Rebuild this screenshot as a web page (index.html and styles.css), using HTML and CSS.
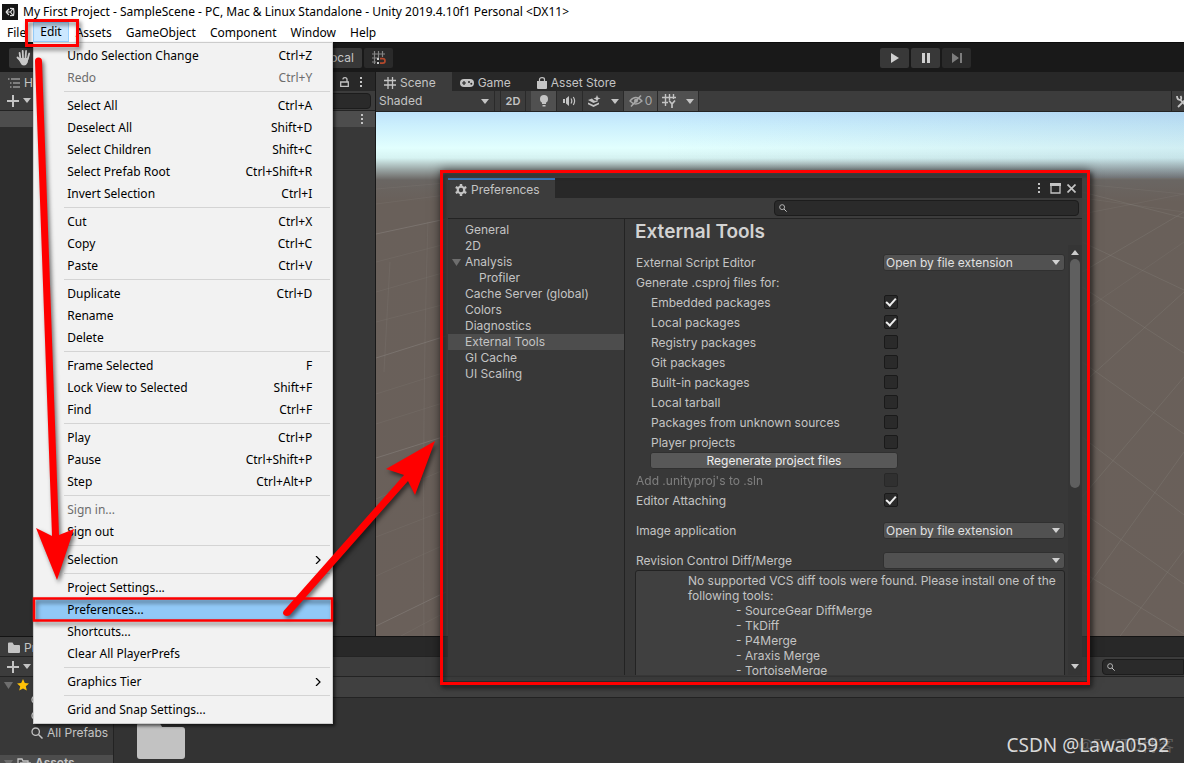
FILE: index.html
```html
<!DOCTYPE html>
<html lang="en">
<head>
<meta charset="utf-8">
<title>My First Project - SampleScene - Unity</title>
<link rel="stylesheet" href="styles.css">
</head>
<body>
<svg class="defs" aria-hidden="true">
  <symbol id="i-dots" viewBox="0 0 4 12"><path d="M1 1h2v2H1zM1 5h2v2H1zM1 9h2v2H1z" fill="currentColor"/></symbol>
  <symbol id="i-caret" viewBox="0 0 8 5"><path d="M0 0h8L4 5z" fill="currentColor"/></symbol>
  <symbol id="i-up" viewBox="0 0 8 5"><path d="M0 5h8L4 0z" fill="currentColor"/></symbol>
  <symbol id="i-plus" viewBox="0 0 12 12"><path d="M6 0v12M0 6h12" stroke="currentColor" stroke-width="2" fill="none"/></symbol>
  <symbol id="i-search" viewBox="0 0 12 12"><circle cx="4.700" cy="4.700" r="3.700" fill="none" stroke="currentColor" stroke-width="1.300"/><path d="M7.500 7.500l4 4" stroke="currentColor" stroke-width="1.500"/></symbol>
  <symbol id="i-list" viewBox="0 0 12 10"><path d="M0 1h1.500M3 1h9M2 5h1.500M5 5h7M2 9h1.500M5 9h7" stroke="currentColor" stroke-width="1.200" fill="none"/></symbol>
  <symbol id="i-grid" viewBox="0 0 12 12"><path d="M4 0v12M8.500 0v12M0 3.500h12M0 8h12" stroke="currentColor" stroke-width="1.300" fill="none"/></symbol>
  <symbol id="i-folder" viewBox="0 0 12 11"><path d="M0 1.500Q0 .5 1 .5h3.500L6 3h5q1 0 1 1v6q0 1-1 1H1q-1 0-1-1z" fill="currentColor"/></symbol>
  <symbol id="i-chevron" viewBox="0 0 6 8"><path d="M1 0l4 4-4 4" stroke="currentColor" stroke-width="1.200" fill="none"/></symbol>
</svg>

<header class="titlebar">
  <svg class="logo" viewBox="0 0 16 16"><rect width="16" height="16" fill="#151515"/><g stroke="#ddd" stroke-width="1.200" fill="none"><path d="M4 8l3-3M4 8l3 3M4 8h4.500M8.500 8l2.500-3.500M8.500 8l2.500 3.500M8 4.300l3.500.2.500 3.500M8 11.700l3.500-.2L12 8"/></g></svg>
  <h1 class="apptitle">My First Project - SampleScene - PC, Mac &amp; Linux Standalone - Unity 2019.4.10f1 Personal &lt;DX11&gt;</h1>
</header>

<nav class="menubar">
  <button class="mb">File</button>
  <div class="mbwrap">
    <button class="mb open">Edit</button>
    <div class="menu">
      <button class="mi"><span>Undo Selection Change</span><span>Ctrl+Z</span></button>
      <button class="mi" disabled><span>Redo</span><span>Ctrl+Y</span></button>
      <hr>
      <button class="mi"><span>Select All</span><span>Ctrl+A</span></button>
      <button class="mi"><span>Deselect All</span><span>Shift+D</span></button>
      <button class="mi"><span>Select Children</span><span>Shift+C</span></button>
      <button class="mi"><span>Select Prefab Root</span><span>Ctrl+Shift+R</span></button>
      <button class="mi"><span>Invert Selection</span><span>Ctrl+I</span></button>
      <hr>
      <button class="mi"><span>Cut</span><span>Ctrl+X</span></button>
      <button class="mi"><span>Copy</span><span>Ctrl+C</span></button>
      <button class="mi"><span>Paste</span><span>Ctrl+V</span></button>
      <hr>
      <button class="mi"><span>Duplicate</span><span>Ctrl+D</span></button>
      <button class="mi"><span>Rename</span></button>
      <button class="mi"><span>Delete</span></button>
      <hr>
      <button class="mi"><span>Frame Selected</span><span>F</span></button>
      <button class="mi"><span>Lock View to Selected</span><span>Shift+F</span></button>
      <button class="mi"><span>Find</span><span>Ctrl+F</span></button>
      <hr>
      <button class="mi"><span>Play</span><span>Ctrl+P</span></button>
      <button class="mi"><span>Pause</span><span>Ctrl+Shift+P</span></button>
      <button class="mi"><span>Step</span><span>Ctrl+Alt+P</span></button>
      <hr>
      <button class="mi" disabled><span>Sign in...</span></button>
      <button class="mi"><span>Sign out</span></button>
      <hr>
      <button class="mi sub"><span>Selection</span><svg class="chev"><use href="#i-chevron"/></svg></button>
      <hr>
      <button class="mi"><span>Project Settings...</span></button>
      <button class="mi hot"><span>Preferences...</span></button>
      <button class="mi"><span>Shortcuts...</span></button>
      <button class="mi"><span>Clear All PlayerPrefs</span></button>
      <hr>
      <button class="mi sub"><span>Graphics Tier</span><svg class="chev"><use href="#i-chevron"/></svg></button>
      <hr>
      <button class="mi"><span>Grid and Snap Settings...</span></button>
    </div>
  </div>
  <button class="mb">Assets</button>
  <button class="mb">GameObject</button>
  <button class="mb">Component</button>
  <button class="mb">Window</button>
  <button class="mb">Help</button>
</nav>

<div class="toolbar">
  <div class="tools">
    <button class="tb hand" aria-label="Hand tool"><svg width="16" height="16" viewBox="0 0 16 16"><path d="M4.500 9L3.600 3M7 8L6.700 1M9.500 8l.6-7M11.700 9l1.500-5.500M5 11L1.500 7.500" stroke="#c8c8c8" stroke-width="1.800" stroke-linecap="round"/><path d="M4 8h8.500l-.8 4.500Q10.500 15.500 8 15.500T4.500 13L2.500 9z" fill="#c8c8c8"/></svg></button>
    <button class="tb local">Local</button>
    <button class="tb snap" aria-label="Grid snapping"><svg width="14" height="14" viewBox="0 0 14 14"><path d="M2.500 0v13M6.500 0v7M10.500 0v6M0 3h13M0 7h6M0 11h4" stroke="#858585" stroke-width="1.200"/><path d="M8 7.700h2.700q2.300 0 2.300 2.200t-2.300 2.200H8" stroke="#b4492c" stroke-width="1.700" fill="none"/><path d="M5 7h2v2H5zM5 11h2v2H5z" fill="#ccc"/></svg></button>
  </div>
  <div class="play">
    <button class="tb" aria-label="Play"><svg width="10" height="12" viewBox="0 0 10 12"><path d="M1 1l8 5-8 5z" fill="#d0d0d0"/></svg></button>
    <button class="tb" aria-label="Pause"><svg width="10" height="12" viewBox="0 0 10 12"><path d="M1 1h3v10H1zM6 1h3v10H6z" fill="#d0d0d0"/></svg></button>
    <button class="tb dim" aria-label="Step"><svg width="12" height="12" viewBox="0 0 12 12"><path d="M1 1l7 5-7 5zM9 1h2v10H9z" fill="#7d7d7d"/></svg></button>
  </div>
</div>

<main class="work">
  <section class="hier">
    <div class="tabs">
      <span class="tab on"><svg width="12" height="10"><use href="#i-list"/></svg>Hierarchy</span>
      <span class="tabend"><svg width="9" height="10" viewBox="0 0 9 10"><path d="M.7 5h7.600v4.300H.7zM7 5V2.500Q7 .7 5 .7T2.800 2.300" fill="none" stroke="currentColor" stroke-width="1.300"/></svg><svg width="4" height="12"><use href="#i-dots"/></svg></span>
    </div>
    <div class="bar"><svg width="12" height="12"><use href="#i-plus"/></svg><svg width="8" height="5"><use href="#i-caret"/></svg><input class="search hsearch" aria-label="Search hierarchy"></div>
    <div class="scenerow"><svg width="4" height="12"><use href="#i-dots"/></svg></div>
    <div class="hbody"></div>
  </section>
  <section class="scene">
    <div class="tabs">
      <span class="tab on first"><svg width="12" height="12"><use href="#i-grid"/></svg>Scene</span>
      <span class="tab game"><svg width="14" height="8" viewBox="0 0 14 8"><rect width="14" height="8" rx="4" fill="currentColor"/><path d="M2 4h4M4 2v4" stroke="#282828" stroke-width="1.200"/><circle cx="9" cy="3" r="1" fill="#282828"/><circle cx="11.300" cy="4.700" r="1" fill="#282828"/></svg>Game</span>
      <span class="tab"><svg width="10" height="12" viewBox="0 0 10 12"><path d="M0 4h10v7q0 1-1 1H1q-1 0-1-1z" fill="currentColor"/><path d="M2.500 6V2.500Q2.500.7 5 .7t2.500 1.800V6" fill="none" stroke="currentColor" stroke-width="1.200"/></svg>Asset Store</span>
    </div>
    <div class="bar stools">
      <button class="st shaded">Shaded<svg width="8" height="5"><use href="#i-caret"/></svg></button>
      <button class="st two">2D</button>
      <button class="st lit" aria-label="Lighting"><svg width="10" height="12" viewBox="0 0 10 12"><circle cx="5" cy="4" r="4" fill="currentColor"/><path d="M3 7h4v2H3zM3.500 10h3v1.500h-3z" fill="currentColor"/></svg></button>
      <button class="st" aria-label="Audio"><svg width="13" height="10" viewBox="0 0 13 10"><path d="M0 3h2v4H0zM3 2.500L6 0v10L3 7.500z" fill="currentColor"/><path d="M8 2.500q1.600 2.500 0 5M10.300 1q2.600 4 0 8" stroke="currentColor" stroke-width="1.200" fill="none"/></svg></button>
      <button class="st fx" aria-label="Effects"><svg width="13" height="12" viewBox="0 0 13 12"><path d="M0 5l4-1.500 2 2 4 .7L5.500 8zM0 7.500L5.500 10 11 7.500v1.700L5.500 12 0 9.200z" fill="currentColor"/><path d="M9 0l1 2.400 2.500 1L10 4.400 9 7 8 4.400l-2.500-1L8 2.400z" fill="currentColor"/></svg><svg width="8" height="5"><use href="#i-caret"/></svg></button>
      <button class="st lit eye"><svg width="14" height="12" viewBox="0 0 14 12"><path d="M1 6q5.500-7 12 0-6.500 6-12 0z" fill="none" stroke="currentColor" stroke-width="1.300"/><circle cx="7" cy="5.700" r="2" fill="currentColor"/><path d="M2 11.500L12 .5" stroke="currentColor" stroke-width="1.500"/></svg>0</button>
      <button class="st lit gridy" aria-label="Grid"><svg width="14" height="14" viewBox="0 0 14 14"><path d="M3.500 0v12M7.500 0v6M11.500 0v5M0 3.500h14M0 8.500h6" stroke="currentColor" stroke-width="1.400"/><path d="M7 6.500l3 3.500v4M13 6.500L10 10" stroke="currentColor" stroke-width="1.700" fill="none"/></svg><svg width="8" height="5"><use href="#i-caret"/></svg></button>
      <button class="st wrench" aria-label="Tools"><svg width="12" height="13" viewBox="0 0 12 13"><path d="M1 1q0 4 3.500 4L11 12M4.500 1Q6 3 4.500 5M2 12L11 3" stroke="currentColor" stroke-width="1.800" fill="none"/></svg></button>
    </div>
    <div class="view">
      <svg class="ground" viewBox="0 0 809 524" preserveAspectRatio="none">
        <g stroke="#8b8580" stroke-opacity=".5" fill="none">
          <path d="M0 122L70 107M0 246L70 224M0 346L70 324M0 514L70 480"/>
          <path stroke-opacity=".2" d="M0 77L70 71M0 92L70 83M0 150L70 132M0 180L70 160M0 210L70 192M0 282L70 260M0 312L70 290M0 387L70 357M0 425L70 398M0 464L70 432M25 524L70 500M14 150L8 260M52 110Q46 300 48 524"/>
          <path stroke-opacity=".3" d="M707 482L809 340M707 80l102 26M707 130l102 48M707 175l102 66M707 250l102 72M707 325l102 78M707 400l102 72M707 460l102 62M745 524l64-86M809 100l-102 60M809 180l-102 92M809 265l-102 120"/>
          <path stroke-opacity=".2" d="M707 72l102 10M707 86l102 14M809 82l-102 20M809 130l-102 70"/>
        </g>
      </svg>
    </div>
  </section>
</main>

<section class="project">
  <div class="tabs">
    <span class="tab on"><svg width="12" height="11"><use href="#i-folder"/></svg>Project</span>
  </div>
  <div class="bar pbar"><svg width="12" height="12"><use href="#i-plus"/></svg><svg width="8" height="5"><use href="#i-caret"/></svg><label class="search psearch"><svg width="8" height="8"><use href="#i-search"/></svg><input aria-label="Search project"></label></div>
  <div class="pcols">
    <div class="tree">
      <div class="tr fav"><svg class="tri" width="9" height="7" viewBox="0 0 8 5" preserveAspectRatio="none"><path d="M0 0h8L4 5z" fill="currentColor"/></svg><svg width="12" height="12" viewBox="0 0 12 12"><path d="M6 0l1.800 4 4.200.4-3.200 2.900 1 4.300L6 9.400l-3.800 2.200 1-4.300L0 4.400 4.200 4z" fill="#ffc107"/></svg>Favorites</div>
      <div class="tr q"><svg width="12" height="12"><use href="#i-search"/></svg>All Materials</div>
      <div class="tr q"><svg width="12" height="12"><use href="#i-search"/></svg>All Models</div>
      <div class="tr q"><svg width="12" height="12"><use href="#i-search"/></svg>All Prefabs</div>
      <div class="tr assets"><svg class="tri" width="9" height="7" viewBox="0 0 8 5" preserveAspectRatio="none"><path d="M0 0h8L4 5z" fill="currentColor"/></svg><svg width="14" height="11" viewBox="0 0 14 11"><path d="M1 10V1h4l1 2h5v2M1 10l2.500-5H13l-2 5z" fill="none" stroke="currentColor" stroke-width="1.300"/></svg>Assets</div>
    </div>
    <div class="files">
      <div class="crumbs"></div>
      <div class="thumbs"><svg width="48" height="36" viewBox="0 0 48 36"><path d="M0 2Q0 0 2 0h19q2 0 3 2l1 2h20q3 0 3 3v26q0 3-3 3H3q-3 0-3-3z" fill="#c2c2c2"/></svg></div>
    </div>
  </div>
</section>

<section class="prefs">
  <div class="ptabs">
    <span class="ptab"><svg width="12" height="12" viewBox="0 0 12 12"><circle cx="6" cy="6" r="3.300" fill="none" stroke="currentColor" stroke-width="2.200"/><path d="M6 0v2.500M6 9.500V12M.8 3L3 4.300M9 7.700L11.200 9M.8 9L3 7.700M9 4.300L11.200 3" stroke="currentColor" stroke-width="2.400"/></svg>Preferences</span>
    <span class="winbtns">
      <button aria-label="Menu"><svg width="4" height="12"><use href="#i-dots"/></svg></button>
      <button aria-label="Maximize"><svg width="11" height="11" viewBox="0 0 11 11"><path d="M1 1h9v9H1z" fill="none" stroke="currentColor" stroke-width="1.300"/><path d="M0 0h11v3H0z" fill="currentColor"/></svg></button>
      <button aria-label="Close"><svg width="9" height="9" viewBox="0 0 9 9"><path d="M.5.5l8 8M8.500.5l-8 8" stroke="currentColor" stroke-width="1.700"/></svg></button>
    </span>
  </div>
  <div class="psb"><label class="search wsearch"><svg width="8" height="8"><use href="#i-search"/></svg><input aria-label="Search preferences"></label></div>
  <div class="pmain">
    <ul class="cats">
      <li>General</li><li>2D</li><li class="parent"><svg width="9" height="7" viewBox="0 0 8 5" preserveAspectRatio="none"><path d="M0 0h8L4 5z" fill="currentColor"/></svg>Analysis</li><li class="child">Profiler</li><li>Cache Server (global)</li><li>Colors</li><li>Diagnostics</li><li class="sel">External Tools</li><li>GI Cache</li><li>UI Scaling</li>
    </ul>
    <div class="pane">
      <h2>External Tools</h2>
      <div class="scroll">
        <form class="form">
          <div class="row"><label for="ed">External Script Editor</label><span class="dd"><select id="ed"><option>Open by file extension</option></select><svg width="8" height="5"><use href="#i-caret"/></svg></span></div>
          <div class="row"><span>Generate .csproj files for:</span></div>
          <div class="row in"><label for="c1">Embedded packages</label><input type="checkbox" id="c1" checked></div>
          <div class="row in"><label for="c2">Local packages</label><input type="checkbox" id="c2" checked></div>
          <div class="row in"><label for="c3">Registry packages</label><input type="checkbox" id="c3"></div>
          <div class="row in"><label for="c4">Git packages</label><input type="checkbox" id="c4"></div>
          <div class="row in"><label for="c5">Built-in packages</label><input type="checkbox" id="c5"></div>
          <div class="row in"><label for="c6">Local tarball</label><input type="checkbox" id="c6"></div>
          <div class="row in"><label for="c7">Packages from unknown sources</label><input type="checkbox" id="c7"></div>
          <div class="row in"><label for="c8">Player projects</label><input type="checkbox" id="c8"></div>
          <button type="button" class="regen">Regenerate project files</button>
          <div class="row off"><label for="c9">Add .unityproj's to .sln</label><input type="checkbox" id="c9" disabled></div>
          <div class="row"><label for="c10">Editor Attaching</label><input type="checkbox" id="c10" checked></div>
          <div class="row gap"><label for="im">Image application</label><span class="dd"><select id="im"><option>Open by file extension</option></select><svg width="8" height="5"><use href="#i-caret"/></svg></span></div>
          <div class="row gap"><label for="rv">Revision Control Diff/Merge</label><span class="dd"><select id="rv"><option></option></select><svg width="8" height="5"><use href="#i-caret"/></svg></span></div>
          <div class="help">
            <p>No supported VCS diff tools were found. Please install one of the following tools:</p>
            <ul><li>- SourceGear DiffMerge</li><li>- TkDiff</li><li>- P4Merge</li><li>- Araxis Merge</li><li>- TortoiseMerge</li></ul>
          </div>
        </form>
        <div class="sbar"><svg width="8" height="5"><use href="#i-up"/></svg><div class="track"><div class="thumb"></div></div><svg width="8" height="5"><use href="#i-caret"/></svg></div>
      </div>
    </div>
  </div>
</section>

<svg class="notes" width="1184" height="763" viewBox="0 0 1184 763" aria-hidden="true">
  <g fill="none" stroke="#f00" stroke-width="3">
    <rect x="26.500" y="20.500" width="51" height="25"/>
    <rect x="34" y="598.500" width="298" height="22" stroke-width="2.500"/>
    <rect x="441.500" y="171.500" width="647" height="512"/>
  </g>
  <g fill="#f00">
    <path d="M35 61q0-3.500 3.500-3.500T42 61L59 535l15-6-17 51L36 528l16 8z"/>
    <path d="M284 610.500L404 475l-18-6 49-28-20 54-7-14L290 615q-3.500 2-6 0-2-2 0-4.500z"/>
  </g>
</svg>
<div class="mark">@51CTO博客</div>
<div class="mark csdn">CSDN @Lawa0592</div>
</body>
</html>
```

FILE: styles.css
```css
* { box-sizing: border-box; }
body {
  margin: 0;
  height: 100vh;
  display: flex;
  flex-direction: column;
  position: relative;
  overflow: hidden;
  background: #191919;
  color: #c4c4c4;
  font: 12px/16px Inter, "Liberation Sans", sans-serif;
}
button, input, select { font: inherit; color: inherit; border: 0; padding: 0; margin: 0; background: none; }
svg { flex: none; }
h1, h2, p, ul { margin: 0; padding: 0; font-weight: 400; }
ul { list-style: none; }
.defs { position: absolute; width: 0; height: 0; }

.titlebar, .menubar { background: #fff; color: #000; font-family: "Noto Sans", "Noto Sans CJK SC", sans-serif; display: flex; align-items: center; flex: none; }
.titlebar { height: 22px; padding: 1px 0 0 2px; gap: 5px; }
.logo { width: 16px; height: 16px; }
.apptitle { font-size: 12px; line-height: 16px; white-space: nowrap; }
.menubar { height: 20px; align-items: stretch; }
.mb { padding: 1px 7px 0; white-space: nowrap; }
.mb.open { background: #cce8ff; border: 1px solid #99d1ff; padding: 0 6px; height: 100%; }
.mbwrap { position: relative; }
.menu {
  position: absolute;
  z-index: 5;
  top: 20px;
  left: 0;
  width: 300px;
  padding: 2px 2px 2px;
  background: #f2f2f2;
  border: 1px solid #ccc;
  box-shadow: 2px 2px 3px #0009;
}
.mi { display: flex; width: 100%; height: 22px; align-items: center; justify-content: space-between; padding: 0 18px 0 31px; color: #000; white-space: nowrap; }
.mi:disabled { color: #6d6d6d; }
.mi.hot { background: #91c9f7; }
.mi.sub { padding-right: 9px; }
.chev { width: 6px; height: 8px; }
.menu hr { height: 1px; margin: 2px 0 3px 28px; border: 0; background: #d4d4d4; }

.toolbar { flex: none; height: 30px; display: flex; justify-content: space-between; align-items: center; padding: 0 213px 0 9px; border-top: 1px solid #0c0c0c; }
.tools, .play { display: flex; gap: 2px; }
.tb { height: 20px; display: flex; align-items: center; justify-content: center; background: #383838; border-radius: 2px; width: 29px; }
.tb.dim, .tb.snap { background: #2a2a2a; }
.tb.local { width: 322px; justify-content: flex-end; padding-right: 8px; }

.work { flex: 1; min-height: 0; display: flex; }
.tabs { height: 19px; display: flex; background: #282828; flex: none; }
.tab { display: flex; align-items: center; gap: 4px; padding: 2px 8px 0; }
.tab.on { background: #3c3c3c; }
.tab.first { padding-right: 16px; }
.tab.game { padding-right: 18px; }
.tabend { margin-left: auto; padding-right: 12px; display: flex; gap: 10px; align-items: center; }
.bar { height: 20px; display: flex; align-items: center; gap: 4px; padding: 0 4px 0 7px; background: #3c3c3c; border-bottom: 1px solid #232323; flex: none; }
.search { background: #2a2a2a; border: 1px solid #1c1c1c; border-radius: 4px; height: 16px; display: flex; align-items: center; padding-left: 4px; }
.search input { min-width: 0; flex: 1; height: 14px; }
.hsearch { flex: 1; }
.hier { width: 32%; max-width: 376px; min-width: 334px; flex: none; display: flex; flex-direction: column; border-right: 1px solid #191919; }
.scenerow { height: 16px; background: #4d4d4d; display: flex; align-items: center; justify-content: flex-end; padding-right: 11px; flex: none; }
.hbody { flex: 1; background: linear-gradient(90deg, #2d2d2d 32px, #383838 32px); }
.scene { flex: 1; min-width: 0; display: flex; flex-direction: column; }
.stools { padding: 0; gap: 0; height: 21px; align-items: stretch; }
.st { display: flex; align-items: center; justify-content: center; width: 26px; border-right: 1px solid #2a2a2a; }
.st.shaded { width: 119px; justify-content: space-between; padding: 0 5px 0 3px; margin-right: 5px; border-left: 0; }
.st.two { width: 26px; font-size: 11px; font-weight: 600; border-left: 1px solid #2a2a2a; margin-right: 5px; }
.st.lit { background: #505050; }
.st.fx, .st.gridy { width: 41px; gap: 10px; }
.st.eye { width: 34px; gap: 2px; color: #a8a8a8; }
.st.wrench { margin-left: auto; width: 13px; border: 0; border-left: 1px solid #232323; padding-left: 4px; justify-content: flex-start; overflow: hidden; }
.view {
  flex: 1;
  min-height: 0;
  background:
    linear-gradient(90deg, #fff0 0, #fff0 35%, #5777a61f 100%) 0 0 / 100% 66px no-repeat,
    linear-gradient(#bfe3fb 0, #ccf0fd 14px, #e2fffe 36px, #d6f3f2 46px, #98a3a2 58px, #6a6663 68px, #69605a 90px, #6a605a);
}
.ground { display: block; width: 100%; height: 100%; }

.project { flex: none; height: 127px; display: flex; flex-direction: column; border-top: 1px solid #141414; }
.pbar { height: 21px; border-top: 1px solid #232323; }
.psearch { margin-left: auto; width: 82px; margin-right: -4px; border-radius: 4px 0 0 4px; }
.pcols { flex: 1; min-height: 0; display: flex; overflow: hidden; }
.tree { width: 114px; background: #383838; border-right: 1px solid #232323; flex: none; overflow: hidden; }
.tr { height: 16px; display: flex; align-items: center; gap: 4px; white-space: nowrap; padding-left: 4px; }
.tr.q { padding-left: 31px; }
.tri { color: #6e6e6e; }
.tr.assets { margin-top: 14px; background: #4d4d4d; font-weight: 600; }
.files { flex: 1; background: #333; }
.crumbs { height: 21px; background: #404040; border-bottom: 1px solid #232323; }
.thumbs { padding: 25px 23px 0; }

.prefs {
  position: absolute;
  left: 448px;
  top: 178px;
  width: 634px;
  height: 497px;
  display: flex;
  flex-direction: column;
  background: #383838;
  box-shadow: 0 0 0 6px #4a4a4a90, 0 0 10px 8px #0008;
}
.ptabs { height: 20px; flex: none; display: flex; justify-content: space-between; background: #282828; }
.ptab { display: flex; align-items: center; gap: 4px; padding: 2px 15px 0 7px; background: #3c3c3c; border-top: 2px solid #3a79bb; }
.winbtns { display: flex; align-items: center; gap: 6px; padding-right: 6px; }
.winbtns button { display: flex; }
.winbtns button:first-child { margin-right: 3px; }
.psb { height: 21px; flex: none; background: #3c3c3c; border-bottom: 1px solid #232323; display: flex; justify-content: flex-end; padding: 2px 3px; }
.wsearch { width: 305px; }
.pmain { flex: 1; min-height: 0; display: flex; }
.cats { width: 177px; flex: none; border-right: 1px solid #232323; padding-top: 3px; }
.cats li { height: 16px; padding-left: 17px; }
.cats .parent { display: flex; align-items: center; gap: 4px; padding-left: 4px; }
.cats .parent svg { color: #6e6e6e; }
.cats .child { padding-left: 31px; }
.cats .sel { background: #4d4d4d; }
.pane { flex: 1; min-width: 0; display: flex; flex-direction: column; }
.pane h2 { font-size: 19px; line-height: 24px; font-weight: 600; color: #d2d2d2; padding: 1px 0 0 10px; flex: none; }
.scroll { flex: 1; min-height: 0; display: flex; overflow: hidden; }
.form { flex: 1; min-width: 0; padding: 8px 3px 0 11px; }
.row { height: 20px; display: grid; grid-template-columns: 247px 1fr; align-items: center; }
.row.in { padding-left: 15px; grid-template-columns: 232px 1fr; }
.row > label, .row > span:first-child { padding-top: 1px; }
.row.off { opacity: .5; }
.row.gap { margin-top: 10px; }
.row > input { margin-left: 1px; }
.dd { position: relative; display: flex; }
.dd select { appearance: none; width: 100%; height: 17px; line-height: 16px; background: #515151; border: 1px solid #303030; border-radius: 3px; padding-left: 2px; color: #e0e0e0; }
.dd svg { position: absolute; right: 5px; top: 6px; color: #d2d2d2; }
input[type=checkbox] { appearance: none; width: 14px; height: 14px; background: #2a2a2a; border: 1px solid #1a1a1a; border-radius: 2px; display: grid; place-items: center; }
input[type=checkbox]:checked::after { content: ""; width: 8px; height: 4px; border: solid #eee; border-width: 0 0 2px 2px; transform: translateY(-1px) rotate(-48deg); }
.regen { display: block; margin: 0 0 1px 14px; width: 248px; height: 17px; line-height: 16px; background: #585858; border: 1px solid #303030; border-radius: 3px; color: #eee; }
.help { margin-left: -1px; height: 130px; padding: 2px 4px 0 52px; background: #404040; border: 1px solid #232323; border-radius: 3px; line-height: 15px; }
.help ul { padding-left: 48px; }
.sbar { width: 14px; margin-top: 1px; background: #353535; display: flex; flex-direction: column; align-items: center; padding: 5px 0 6px; gap: 4px; color: #ccc; }
.track { flex: 1; }
.thumb { width: 10px; height: 229px; border-radius: 5px; background: #5f5f5f; }

.notes { position: absolute; left: 0; top: 0; z-index: 9; pointer-events: none; filter: drop-shadow(2px 3px 2px #0008); }
.mark { position: absolute; right: 10px; bottom: 7px; z-index: 10; font: 16px/22px "Noto Sans", "Noto Sans CJK SC", sans-serif; color: #ffffff38; }
.mark.csdn { right: 15px; font-size: 19px; color: #d8d8d8; }
```
